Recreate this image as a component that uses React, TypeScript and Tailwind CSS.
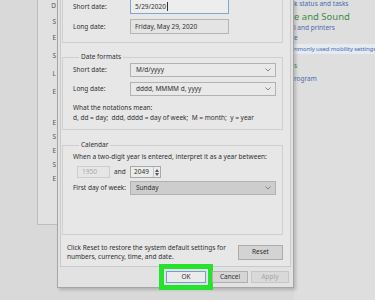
import React from "react";

const Chevron = () => (
  <svg width="6" height="4" viewBox="0 0 6 4" className="shrink-0">
    <polyline points="0.5,0.5 3,3 5.5,0.5" fill="none" stroke="#7a7a7a" strokeWidth="0.9" />
  </svg>
);

const Dropdown = ({ value, dark }: { value: string; dark?: boolean }) => (
  <div
    className={`w-[146px] h-[14px] flex items-center justify-between pl-[5px] pr-[4px] border border-[#b2b2b2] ${
      dark ? "bg-[#cdcdcd]" : "bg-[#e9e9e9]"
    }`}
  >
    <span>{value}</span>
    <Chevron />
  </div>
);

const Row = ({ label, children }: { label: string; children: React.ReactNode }) => (
  <div className="flex items-center">
    <span className="w-[57px] shrink-0 whitespace-nowrap">{label}</span>
    {children}
  </div>
);

const behindLetters = [
  { ch: "D", mt: "mt-[1px]" },
  { ch: "S", mt: "mt-[6px]" },
  { ch: "E", mt: "mt-[6px]" },
  { ch: "S", mt: "mt-[8px]" },
  { ch: "L", mt: "mt-[8px]" },
  { ch: "E", mt: "mt-[8px]" },
  { ch: "E", mt: "mt-[21px]" },
  { ch: "S", mt: "mt-[4px]" },
  { ch: "E", mt: "mt-[4px]" },
  { ch: "S", mt: "mt-[4px]" },
  { ch: "E", mt: "mt-[4px]" },
];

const App = () => {
  return (
    <div className="w-[375px] h-[300px] overflow-hidden flex bg-[#d9d9d9] font-['Noto_Sans',sans-serif] text-[6.5px] leading-[10px] text-[#303030]">
      {/* empty desktop strip */}
      <div className="w-[37px] shrink-0" />

      {/* Region window behind the dialog */}
      <div className="w-[20px] h-[225px] shrink-0 bg-[#e1e1e1] border-l border-b border-[#bdbdbd] flex flex-col items-end pr-[1px] text-[#555]">
        {behindLetters.map((l, i) => (
          <span key={i} className={`${l.mt} leading-[10px]`}>
            {l.ch}
          </span>
        ))}
      </div>

      {/* Customize Format dialog */}
      <div className="w-[237px] h-[288px] shrink-0 flex flex-col bg-[#e2e2e2] border-x border-b border-[#a6a6a6] shadow-[2px_2px_3px_rgba(0,0,0,0.18)] pl-[2px] pr-[2px] z-10">
        {/* tab page */}
        <div className="w-[231px] h-[267px] shrink-0 bg-[#e7e7e7] border-x border-b border-[#cacaca] pl-[1px]">
          {/* Examples group (top cut off) */}
          <div className="w-[221px] border-x border-b border-[#cfcfcf] pl-[10px] pb-[8px] -mt-[1px]">
            <Row label="Short date:">
              <div className="w-[99px] h-[15px] flex items-center pl-[4px] bg-[#ededed] border border-[#7fa6d4]">
                5/29/2020
                <span className="w-px h-[9px] bg-[#333] ml-[1px]" />
              </div>
            </Row>
            <div className="mt-[5px]">
              <Row label="Long date:">
                <div className="w-[99px] h-[15px] flex items-center pl-[4px] bg-[#e4e4e4] border border-[#b5b5b5]">
                  Friday, May 29, 2020
                </div>
              </Row>
            </div>
          </div>

          {/* Date formats */}
          <fieldset className="w-[221px] mt-[9px] border border-[#cfcfcf] pl-[10px] pb-[6px]">
            <legend className="ml-[6px] px-[2px] leading-[10px]">Date formats</legend>
            <div className="mt-[1px]">
              <Row label="Short date:">
                <Dropdown value="M/d/yyyy" />
              </Row>
            </div>
            <div className="mt-[5px]">
              <Row label="Long date:">
                <Dropdown value="dddd, MMMM d, yyyy" />
              </Row>
            </div>
            <div className="mt-[7px]">
              <p>What the notations mean:</p>
              <p className="whitespace-nowrap">d, dd = day;&nbsp; ddd, dddd = day of week;&nbsp; M = month;&nbsp; y = year</p>
            </div>
          </fieldset>

          {/* Calendar */}
          <fieldset className="w-[221px] mt-[10px] border border-[#cfcfcf] pl-[10px] pb-[39px]">
            <legend className="ml-[6px] px-[2px] leading-[10px]">Calendar</legend>
            <p className="mt-[2px] whitespace-nowrap">When a two-digit year is entered, interpret it as a year between:</p>
            <div className="mt-[4px] flex items-center h-[12px]">
              <div className="ml-[4px] w-[33px] h-[12px] flex items-center pl-[4px] border border-[#cdcdcd] bg-[#e6e6e6] text-[#a8a8a8]">
                1950
              </div>
              <span className="ml-[4px] w-[16px]">and</span>
              <div className="w-[31px] h-[12px] flex border border-[#a9a9a9] bg-[#ececec]">
                <span className="flex-1 pl-[3px] leading-[10px]">2049</span>
                <div className="w-[7px] flex flex-col items-center justify-center gap-[1px] border-l border-[#c4c4c4]">
                  <svg width="4" height="3" viewBox="0 0 4 3">
                    <polygon points="0,3 2,0 4,3" fill="#555" />
                  </svg>
                  <svg width="4" height="3" viewBox="0 0 4 3">
                    <polygon points="0,0 4,0 2,3" fill="#555" />
                  </svg>
                </div>
              </div>
            </div>
            <div className="mt-[3px]">
              <Row label="First day of week:">
                <Dropdown value="Sunday" dark />
              </Row>
            </div>
          </fieldset>

          {/* Reset */}
          <div className="w-[221px] mt-[8px] flex items-center justify-between pl-[5px]">
            <p className="leading-[9px] whitespace-nowrap">
              Click Reset to restore the system default settings for
              <br />
              numbers, currency, time, and date.
            </p>
            <button className="w-[45px] h-[15px] bg-[#d3d3d3] border border-[#acacac] text-[6.5px] leading-none">
              Reset
            </button>
          </div>
        </div>

        {/* dialog buttons */}
        <div className="flex mt-[4px] pl-[106px]">
          <button className="w-[40px] h-[12px] bg-[#ebebeb] border border-[#6f9fd6] text-[6.5px] leading-none outline-[5px] outline-solid outline-[#27e22c] outline-offset-[2px]">
            OK
          </button>
          <button className="ml-[6px] w-[36px] h-[12px] bg-[#d6d6d6] border border-[#b0b0b0] text-[6.5px] leading-none">
            Cancel
          </button>
          <button className="ml-[3px] w-[38px] h-[12px] bg-[#d9d9d9] border border-[#c6c6c6] text-[6.5px] leading-none text-[#a5a5a5]">
            Apply
          </button>
        </div>
      </div>

      {/* Control Panel behind, clipped by the dialog */}
      <div className="flex-1 h-full bg-[#dedede] text-[#4a6cae] whitespace-nowrap overflow-hidden">
        <p className="mt-0 leading-[8px]">k status and tasks</p>
        <p className="mt-[3px] text-[9.5px] leading-[12px] text-[#3e8c45]">e and Sound</p>
        <p className="leading-[9px]">l and printers</p>
        <p className="mt-[1px]">e</p>
        <p className="mt-[1px] bg-[#e6eaf1] text-[6px] tracking-[-0.1px]">nmonly used mobility settings</p>
        <p className="mt-[7px] text-[#3e8c45]">s</p>
        <p className="mt-[3px]">rogram</p>
      </div>
    </div>
  );
};

export default App;
